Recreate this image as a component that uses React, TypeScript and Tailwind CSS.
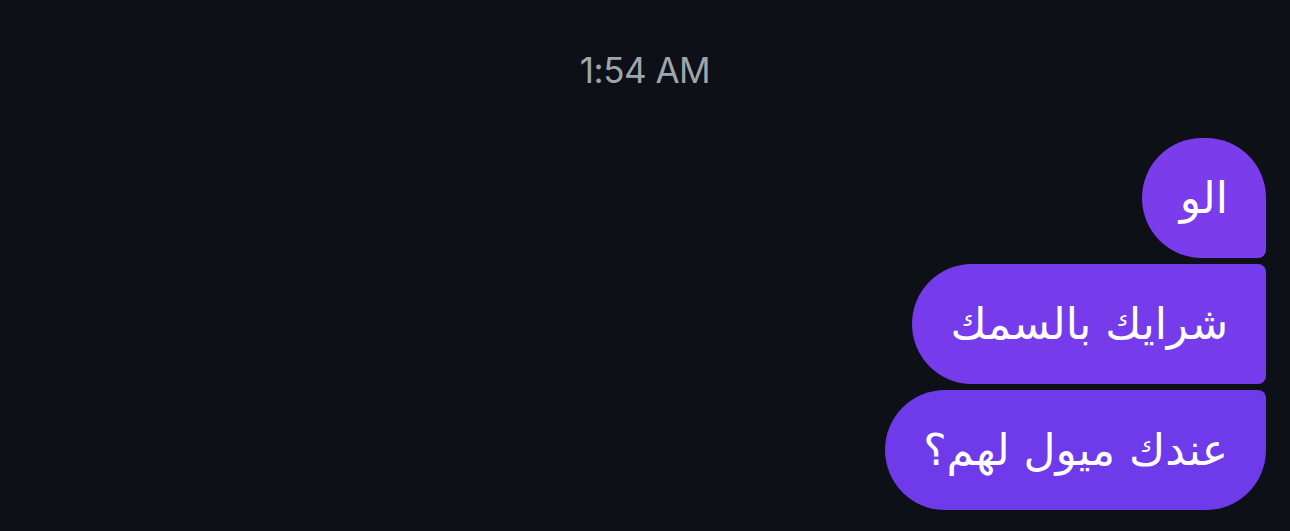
import React from 'react';

const messages = [
  { id: 1, text: 'الو', corners: 'rounded-[60px] rounded-br-[8px]', bg: 'bg-[#7b3deb]' },
  { id: 2, text: 'شرايك بالسمك', corners: 'rounded-[60px] rounded-tr-[8px] rounded-br-[8px]', bg: 'bg-[#763ceb]' },
  { id: 3, text: 'عندك ميول لهم؟', corners: 'rounded-[60px] rounded-tr-[8px]', bg: 'bg-[#6e3aea]' },
];

export default function App() {
  return (
    <div className="min-h-screen w-full bg-[#0d1016] font-['Inter','DejaVu_Sans',sans-serif]">
      {/* Timestamp */}
      <div className="pt-[48px] text-center text-[35px] leading-[44px] tracking-[-0.5px] text-[#a0a5ad]">1:54 AM</div>

      {/* Messages */}
      <div className="mt-[46px] flex flex-col items-end gap-[6px] pr-[24px]">
        {messages.map((m) => (
          <div
            key={m.id}
            dir="rtl"
            className={`flex h-[120px] items-center px-[38px] text-[44px] text-white ${m.bg} ${m.corners} font-['DejaVu_Sans',sans-serif]`}
          >
            {m.text}
          </div>
        ))}
      </div>
    </div>
  );
}
